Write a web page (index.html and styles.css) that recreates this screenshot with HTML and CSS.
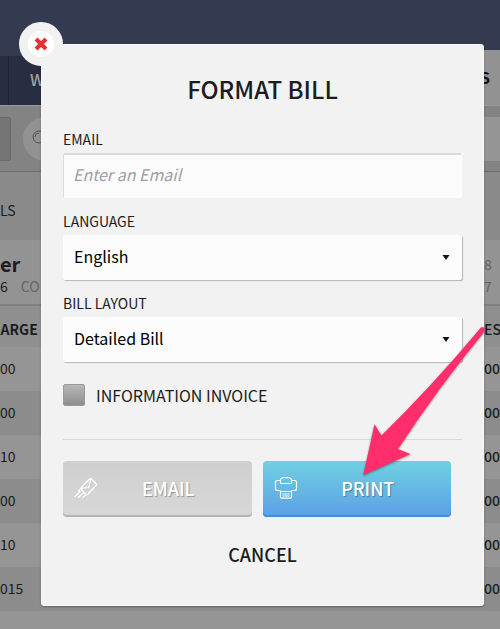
FILE: index.html
```
<!DOCTYPE html>
<html lang="en">
<head>
    <meta charset="UTF-8">
    <meta name="viewport" content="width=device-width, initial-scale=1.0">
    <title>Format Bill</title>
    <link rel="stylesheet" href="styles.css">
</head>
<body>
    <div class="page">
        <header class="topbar"></header>
        <nav class="tabs">
            <a href="#" class="tab">W</a>
            <a href="#" class="tab active">S</a>
        </nav>
        <div class="toolbar">
            <div class="filter"></div>
            <div class="search">
                <svg width="16" height="16" viewBox="0 0 16 16" fill="none" stroke="#555" stroke-width="1">
                    <circle cx="8" cy="7" r="6"/>
                    <path d="M4 7A4 4 0 0 1 8 3"/>
                </svg>
            </div>
            <div class="search-end"></div>
        </div>
        <div class="section-title">LS</div>
        <div class="summary">
            <div>
                <div class="name">er</div>
                <div class="meta"><span>6</span><span class="muted">CO</span></div>
            </div>
            <div class="side muted">
                <div>8</div>
                <div>7</div>
            </div>
        </div>
        <table class="charges">
            <thead>
                <tr><th class="first">HARGE</th><th class="last">ES</th></tr>
            </thead>
            <tbody>
                <tr><td>00</td><td class="last">00</td></tr>
                <tr><td>00</td><td class="last">00</td></tr>
                <tr><td>10</td><td class="last">00</td></tr>
                <tr><td>00</td><td class="last">00</td></tr>
                <tr><td>10</td><td class="last">00</td></tr>
                <tr><td>015</td><td class="last">00</td></tr>
            </tbody>
        </table>
    </div>

    <div class="overlay">
        <form class="modal">
            <button type="button" class="close" aria-label="Close">
                <svg width="14" height="14" viewBox="0 0 14 14" stroke="#e5322e" stroke-width="4">
                    <path d="M2 2L12 12M12 2L2 12"/>
                </svg>
            </button>

            <h1>FORMAT BILL</h1>

            <div class="field">
                <label for="email">EMAIL</label>
                <input type="email" id="email" placeholder="Enter an Email">
            </div>

            <div class="field">
                <label for="language">LANGUAGE</label>
                <div class="select">
                    <select id="language">
                        <option>English</option>
                    </select>
                    <svg width="8" height="5" viewBox="0 0 8 5"><path d="M0.5 0H7.5L4 5Z" fill="#111"/></svg>
                </div>
            </div>

            <div class="field">
                <label for="layout">BILL LAYOUT</label>
                <div class="select">
                    <select id="layout">
                        <option>Detailed Bill</option>
                    </select>
                    <svg width="8" height="5" viewBox="0 0 8 5"><path d="M0.5 0H7.5L4 5Z" fill="#111"/></svg>
                </div>
            </div>

            <div class="check">
                <input type="checkbox" id="invoice">
                <label for="invoice">INFORMATION INVOICE</label>
            </div>

            <div class="actions">
                <button type="button" class="btn btn-email">
                    <svg width="24" height="22" viewBox="0 0 24 22" fill="none" stroke="#fff" stroke-width="1.2" stroke-linejoin="round" stroke-linecap="round">
                        <path d="M6.5 11.5L15.5 2Q16.5 1 17.5 2L22 6.5Q22.8 7.5 22 8.5L13.5 17.5Q12.5 18.3 11.5 17.4Z"/>
                        <path d="M6.5 11.5L14 10.5Q15 10.3 15.2 9.5L16.5 1.7"/>
                        <path d="M6 14.5L1 19.5M9 16L4.5 20.5M11 18.5L9 20.5M4.5 14L5.5 13"/>
                    </svg>
                    <span>EMAIL</span>
                </button>
                <button type="button" class="btn btn-print">
                    <svg width="24" height="22" viewBox="0 0 24 22" fill="none" stroke="#fff" stroke-width="1.2" stroke-linejoin="round">
                        <path d="M6.5 13.5H3.5Q1.5 13.5 1.5 11.5V5.5Q1.5 3.5 3.5 3.5H6.5M17.5 3.5H20.5Q22.5 3.5 22.5 5.5V11.5Q22.5 13.5 20.5 13.5H17.5"/>
                        <path d="M6.5 6.5V2.5L8.5 0.6H15.5L17.5 2.5V6.5Z"/>
                        <path d="M6.5 14.5H17.5V20Q17.5 21.2 16.5 21.2H7.5Q6.5 21.2 6.5 20Z"/>
                        <path d="M8.5 17H15.5M8.5 19H15.5"/>
                    </svg>
                    <span>PRINT</span>
                </button>
            </div>

            <button type="button" class="cancel">CANCEL</button>

            <svg class="pointer" width="126" height="155" viewBox="361 324 126 155" aria-hidden="true">
                <path d="M363.3 475L374.5 424.3L381.5 435.5Q432 386 480.5 328Q482.5 326 484 328Q485.5 330 484 332Q438 388 398 449L410.5 454Z" fill="#ff2d6b"/>
            </svg>
        </form>
    </div>
</body>
</html>
```

FILE: styles.css
```
* {
    box-sizing: border-box;
}
body {
    margin: 0;
    font-family: "Noto Sans CJK SC", "Open Sans", sans-serif;
    font-size: 14px;
    line-height: 22px;
    color: #1b1c20;
    background-color: #959595;
    position: relative;
    min-height: 100vh;
    overflow-x: hidden;
}
button, input, select {
    font-family: inherit;
    color: inherit;
}

/* page behind the dialog */
.page {
    overflow: hidden;
}
.topbar {
    height: 50px;
    background-color: #343a50;
}
.tabs {
    display: flex;
    justify-content: space-between;
    height: 55px;
    background-color: #343a50;
}
.tab {
    flex: 1;
    margin-top: 6px;
    padding-left: 21px;
    border-left: 1px solid #1e2233;
    background-color: #282d41;
    color: #a0a0a0;
    font-size: 16px;
    font-weight: 500;
    line-height: 46px;
    text-decoration: none;
}
.tab:first-child {
    box-shadow: -8px 0 0 #282d41;
    margin-left: 8px;
}
.tab.active {
    flex: none;
    width: 20px;
    margin-top: 0;
    padding: 0;
    border: none;
    background-color: #929292;
    color: #111;
    font-weight: 700;
    line-height: 54px;
}
.toolbar {
    display: flex;
    align-items: center;
    height: 67px;
    background-color: #838383;
    border-top: 1px solid #999;
    border-bottom: 1px solid #6c6c6c;
}
.filter {
    width: 11px;
    height: 44px;
    background-color: #757575;
    border: 1px solid #696969;
    border-left: none;
    border-radius: 0 3px 3px 0;
}
.search {
    width: 44px;
    height: 44px;
    margin-left: 12px;
    padding: 12px 8px;
    border-radius: 50%;
    background-color: #929292;
}
.search-end {
    width: 18px;
    height: 44px;
    margin-left: auto;
    background-color: #959595;
}
.section-title {
    height: 68px;
    line-height: 76px;
    background-color: #8a8a8a;
}
.summary {
    display: flex;
    justify-content: space-between;
    height: 66px;
    padding-top: 13px;
    background-color: #939393;
    border-bottom: 2px solid #808080;
}
.name {
    font-size: 20px;
    font-weight: 700;
    line-height: 22px;
}
.meta {
    display: flex;
    gap: 13px;
}
.muted {
    color: #666;
}
.side {
    width: 16px;
}
.charges {
    width: 100%;
    border-collapse: collapse;
    table-layout: fixed;
}
.charges th, .charges td {
    height: 44px;
    padding: 0 0 2px;
    text-align: left;
}
.charges th {
    height: 41px;
    padding-top: 6px;
    font-weight: 700;
    background-color: #8f8f8f;
}
.charges .first {
    text-indent: -10px;
}
.charges .last {
    width: 16px;
    font-weight: 500;
    overflow: hidden;
}
.charges tbody tr:nth-child(odd) {
    background-color: #959595;
}
.charges tbody tr:nth-child(even) {
    background-color: #8c8c8c;
}

/* dialog */
.overlay {
    position: absolute;
    top: 0;
    left: 0;
    right: 0;
    padding: 44px 16px 0 41px;
}
.modal {
    position: relative;
    padding: 30px 22px 38px;
    background-color: #f2f2f2;
    border-radius: 4px;
    box-shadow: 0 1px 2px rgba(0,0,0,0.3), inset 0 0 0 1px #f9f9f9;
}
.close {
    position: absolute;
    top: -22px;
    left: -22px;
    display: flex;
    align-items: center;
    justify-content: center;
    width: 44px;
    height: 44px;
    padding: 0;
    border: 9px solid #f2f2f2;
    border-radius: 50%;
    background-color: #fff;
    cursor: pointer;
}
h1 {
    margin: 0 0 21px;
    font-size: 24px;
    font-weight: 500;
    line-height: 30px;
    text-align: center;
}
.field {
    margin-bottom: 9px;
}
.field label {
    display: block;
    line-height: 28px;
}
.field input, .field select {
    display: block;
    width: 100%;
    height: 45px;
    padding: 0 10px 3px;
    border: 1px solid #fcfcfc;
    border-radius: 2px;
    background-color: #fcfcfc;
    font-size: 16px;
    appearance: none;
}
.field input {
    padding: 0 9px 4px;
    border-top: 2px solid #dcdcdc;
    border-left-color: #dcdcdc;
}
.field input::placeholder {
    color: #a0a0a0;
    font-style: italic;
}
.field select {
    color: #000;
    box-shadow: 1px 1px 1px rgba(0,0,0,0.25);
}
.select {
    position: relative;
}
.select svg {
    position: absolute;
    top: 20px;
    right: 12px;
    pointer-events: none;
}
.check {
    display: flex;
    align-items: center;
    gap: 11px;
    margin-top: 22px;
    padding-bottom: 33px;
    border-bottom: 1px solid #d8d8d8;
    font-size: 16px;
    line-height: 20px;
}
.check input {
    width: 22px;
    height: 22px;
    margin: 0;
    border: 1px solid #999;
    border-radius: 2px;
    background: linear-gradient(#b8b8b8, #8e8e8e);
    appearance: none;
}
.actions {
    display: grid;
    grid-template-columns: 1fr 1fr;
    gap: 11px;
    margin: 21px 11px 23px 0;
}
.btn {
    display: flex;
    align-items: center;
    height: 56px;
    padding: 0 13px 2px 11px;
    border: none;
    border-radius: 4px;
    color: #fff;
    font-size: 18px;
    font-weight: 500;
    cursor: pointer;
}
.btn span {
    flex: 1;
    text-align: center;
}
.btn-email {
    background: linear-gradient(#cfcfcf, #d8d8d8);
    box-shadow: inset 0 -2px 0 #b4b4b4;
    text-shadow: 1px 1px 1px rgba(0,0,0,0.3);
}
.btn-print {
    background: linear-gradient(#70d1e2, #5c9fe6);
    box-shadow: inset 0 -2px 0 #4b8bd6;
    text-shadow: 1px 1px 1px rgba(0,0,0,0.3);
}
.cancel {
    display: block;
    margin: 0 auto;
    padding: 0;
    border: none;
    background: none;
    font-size: 18px;
    font-weight: 500;
    line-height: 28px;
    cursor: pointer;
}
/* callout arrow aimed at the print button */
.pointer {
    position: absolute;
    top: 280px;
    right: -3px;
    filter: drop-shadow(0 1px 1px rgba(0,0,0,0.4));
    pointer-events: none;
}
```
